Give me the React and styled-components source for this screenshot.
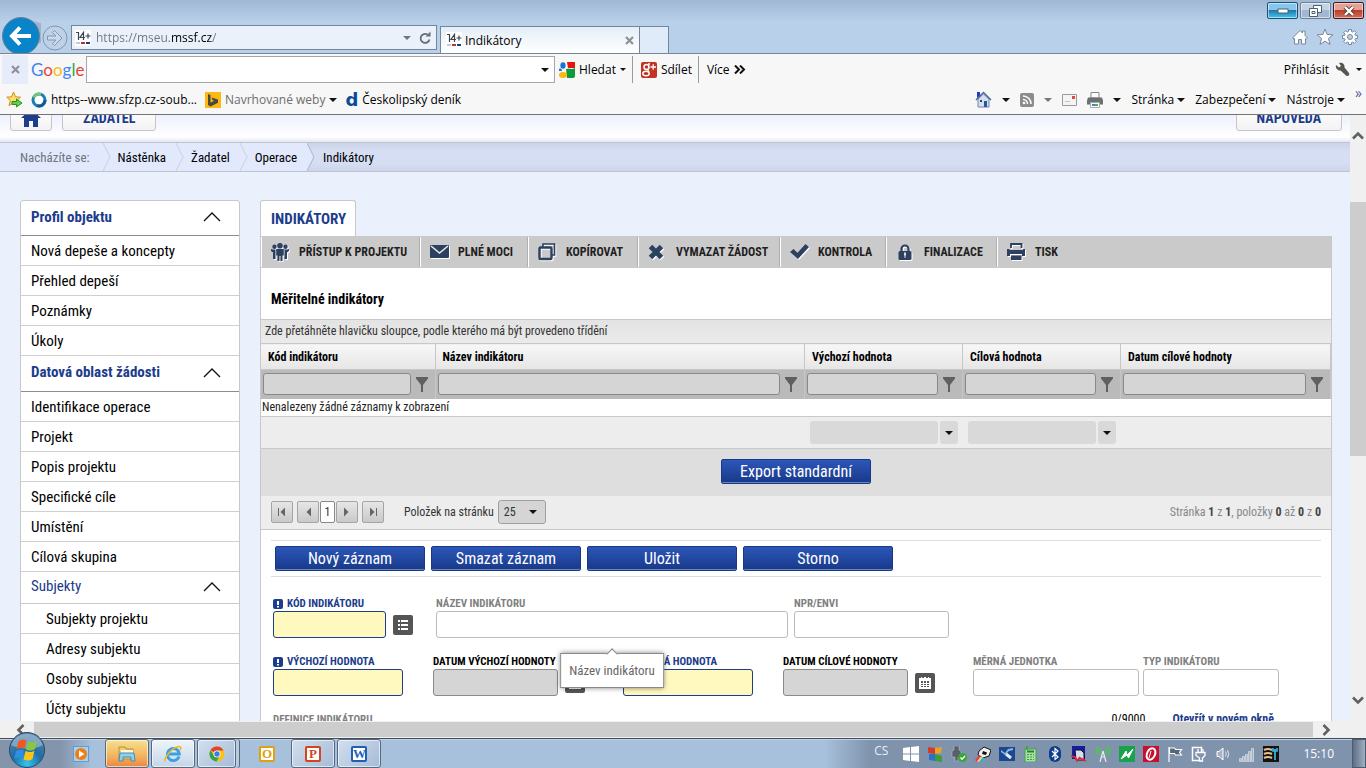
import React, { useState } from "react";
import styled, { createGlobalStyle, css } from "styled-components";

const condensed = `"Roboto Condensed", "Liberation Sans Narrow", Roboto, sans-serif`;
const system = `"Segoe UI", "Open Sans", sans-serif`;

const crumbs = ["Nástěnka", "Žadatel", "Operace"];

const menu = [
  {
    title: "Profil objektu",
    items: ["Nová depeše a koncepty", "Přehled depeší", "Poznámky", "Úkoly"],
  },
  {
    title: "Datová oblast žádosti",
    items: [
      "Identifikace operace",
      "Projekt",
      "Popis projektu",
      "Specifické cíle",
      "Umístění",
      "Cílová skupina",
    ],
  },
  {
    title: "Subjekty",
    nested: true,
    items: [
      "Subjekty projektu",
      "Adresy subjektu",
      "Osoby subjektu",
      "Účty subjektu",
    ],
  },
];

const columns = [
  { title: "Kód indikátoru", width: "174px" },
  { title: "Název indikátoru", width: "auto" },
  { title: "Výchozí hodnota", width: "158px", sum: true },
  { title: "Cílová hodnota", width: "158px", sum: true },
  { title: "Datum cílové hodnoty", width: "210px" },
];

/* ---------- icons ---------- */

const Caret = ({ color = "#111", size = 8 }) => (
  <svg width={size} height={size / 2} viewBox="0 0 8 4">
    <path d="M0 0h8L4 4z" fill={color} />
  </svg>
);

const Favicon = () => (
  <svg width="16" height="16" viewBox="0 0 16 16">
    <rect width="16" height="16" fill="#fff" />
    <path
      d="M1 2.500h2.500v7.500M8.500 10V2.500L5 7.500h5M10.500 6h5M13 3.500v5"
      fill="none"
      stroke="#3d4552"
      strokeWidth="1.200"
    />
    <path d="M1 12h4v2H1z" fill="#c9c9c9" />
    <path d="M6 12h4v2H6z" fill="#b5352c" />
    <path d="M11 12h4v2h-4z" fill="#1c3c8c" />
  </svg>
);

const BackIcon = () => (
  <svg width="40" height="36" viewBox="0 0 40 36">
    <path d="M20 1c10 0 12 4 20 5v20H30z" fill="#9fb4cc" />
    <circle cx="20" cy="19" r="18.500" fill="#0a84c8" stroke="#6b7f93" />
    <path
      d="M30 19H12M19 10.500L11 19l8 8.500"
      fill="none"
      stroke="#fff"
      strokeWidth="4"
    />
  </svg>
);

const ForwardIcon = () => (
  <svg width="26" height="26" viewBox="0 0 26 26">
    <circle cx="13" cy="13" r="12" fill="#bdd1e8" stroke="#8396ab" />
    <path
      d="M5.500 11h8.500l-3.500-3.500 2-2L20 13l-7.500 7.500-2-2L14 15H5.500z"
      fill="#c9daee"
      stroke="#8396ab"
    />
  </svg>
);

const RefreshIcon = () => (
  <svg width="12" height="14" viewBox="0 0 12 14">
    <path
      d="M10.500 8.500A4.500 4.500 0 1 1 8.500 3.600"
      fill="none"
      stroke="#666f78"
      strokeWidth="1.800"
    />
    <path d="M6.500 5.500h5V.500z" fill="#666f78" />
  </svg>
);

const CrossIcon = ({ size = 9, color = "#8d9297" }) => (
  <svg width={size} height={size} viewBox="0 0 9 9">
    <path d="M1 1l7 7M8 1L1 8" stroke={color} strokeWidth="2.200" />
  </svg>
);

const HomeOutline = () => (
  <svg width="18" height="18" viewBox="0 0 18 18">
    <path
      d="M2 9.500l7-7 2.500 2.500V3h2.500v4.500l2.500 2.500-1.200 1.200-.8-.7V16h-4v-4.500h-3V16h-4v-5.500l-.8.700z"
      fill="#fff"
      stroke="#76889c"
    />
  </svg>
);

const StarOutline = () => (
  <svg width="18" height="18" viewBox="0 0 18 18">
    <path
      d="M9 1l2.100 5.400 5.900.4-4.500 3.700 1.500 5.900L9 13.200l-5 3.200 1.500-5.900L1 6.800l5.900-.4z"
      fill="#fff"
      stroke="#76889c"
    />
  </svg>
);

const GearOutline = () => (
  <svg width="18" height="18" viewBox="0 0 18 18">
    <path
      d="M7.500 1.500h3v2l1.300.6 1.500-1.500 2 2-1.400 1.600.6 1.300h2v3h-2l-.6 1.300 1.400 1.600-2 2-1.500-1.400-1.300.5v2h-3v-2L6.200 14l-1.500 1.400-2-2 1.400-1.600-.6-1.300h-2v-3h2l.6-1.300-1.400-1.600 2-2 1.500 1.500 1.300-.6z"
      fill="#fff"
      stroke="#76889c"
    />
    <circle cx="9" cy="9" r="2.500" fill="#b9d0ea" stroke="#76889c" />
  </svg>
);

const SearchLogo = () => (
  <svg width="16" height="16" viewBox="0 0 16 16">
    <path d="M8 0h8v6H9z" fill="#e8150c" />
    <path d="M7 7c4-1 5 1 9-1v8c0 1-1 2-2 2H8z" fill="#0f9a3c" />
    <ellipse cx="4" cy="3.500" rx="2.600" ry="3.200" fill="#1673d1" />
    <ellipse cx="4" cy="13" rx="4" ry="3" fill="#f9b90f" />
    <path d="M0 7c2-1 3 0 3 2H0z" fill="#1673d1" />
  </svg>
);

const PlusLogo = () => (
  <svg width="16" height="16" viewBox="0 0 16 16">
    <rect width="16" height="16" rx="2" fill="#c23321" />
    <circle cx="5.500" cy="5" r="2.500" fill="none" stroke="#fff" strokeWidth="1.500" />
    <ellipse cx="5" cy="11.500" rx="3.200" ry="2.300" fill="none" stroke="#fff" strokeWidth="1.500" />
    <path d="M7 2h2M6.500 7.500L8 10M9.500 5h5.500M12.200 2.200v5.600" stroke="#fff" strokeWidth="1.300" />
  </svg>
);

const WrenchIcon = () => (
  <svg width="15" height="15" viewBox="0 0 15 15">
    <path
      d="M1 3l3 2.500L6 4 4 1c3-1 6 1 5.500 4.500L14 11c1 2-1 4-3 2.500L5.500 8.500C3 9 0 6 1 3z"
      fill="#55584f"
    />
  </svg>
);

const AddStar = () => (
  <svg width="17" height="17" viewBox="0 0 17 17">
    <path
      d="M7.500 1l2 4.800 5 .4-3.800 3.400 1.300 5-4.500-2.700L3 14.600l1.300-5L.8 6.200l4.800-.4z"
      fill="#ffdc6b"
      stroke="#c8901c"
    />
    <path d="M6 10.500h4.500V8l5.500 4-5.500 4v-2.500H6z" fill="#5bd24c" stroke="#2c8c28" />
  </svg>
);

const RingLogo = () => (
  <svg width="16" height="16" viewBox="0 0 16 16">
    <circle cx="8" cy="8" r="6" fill="#fff" stroke="#1c7fb4" strokeWidth="3" />
    <path d="M2.500 5.500A6 6 0 0 1 10 2.300" fill="none" stroke="#7cc576" strokeWidth="3" />
    <path d="M14 8a6 6 0 0 1-8 5.700" fill="none" stroke="#0f5a96" strokeWidth="3" />
  </svg>
);

const BingLogo = () => (
  <svg width="16" height="16" viewBox="0 0 16 16">
    <rect width="16" height="16" fill="#fdb813" />
    <path d="M3 2l2.500 1v7.500L9 9 7.500 8 6.500 5.500 13 7.500v3.200L5.500 14.500 3 13z" fill="#4a4a3a" />
  </svg>
);

const HouseColor = () => (
  <svg width="17" height="17" viewBox="0 0 17 17">
    <path d="M3 8v8h11V8L8.500 3z" fill="#d6dfec" stroke="#6b86b0" />
    <path d="M2 1h3v4l-3 2z" fill="#2438c8" />
    <path d="M1 9l7.500-7.500L16 9" fill="none" stroke="#4e6d9e" strokeWidth="1.500" />
    <path d="M9 10h3v6H9z" fill="#2556a8" />
    <path d="M5 9h2v2H5z" fill="#444" />
  </svg>
);

const FeedIcon = () => (
  <svg width="14" height="14" viewBox="0 0 14 14">
    <rect width="14" height="14" rx="2" fill="#8c8c8c" />
    <circle cx="4" cy="10" r="1.300" fill="#fff" />
    <path d="M3 6.500A4.500 4.500 0 0 1 7.500 11M3 3a8 8 0 0 1 8 8" fill="none" stroke="#fff" strokeWidth="1.500" />
  </svg>
);

const MailIcon = () => (
  <svg width="15" height="12" viewBox="0 0 15 12">
    <path d="M.500.500h14v11H.500z" fill="#f4f4f4" stroke="#9b9b9b" />
    <path d="M10 2h3v3h-3z" fill="#e04a3c" />
    <path d="M3 7.500h5" stroke="#c4c4c4" />
  </svg>
);

const PrinterColor = () => (
  <svg width="16" height="16" viewBox="0 0 16 16">
    <path d="M4 .500h8V6H4z" fill="#fff" stroke="#888" />
    <path d="M1 5.500h14l1 3v4H0v-4z" fill="#6d7073" />
    <path d="M3.500 10.500h9v5h-9z" fill="#fff" stroke="#aaa" />
    <path d="M5 12h3v2H5z" fill="#3a87d2" />
    <path d="M8 12h3v2H8z" fill="#55ad4b" />
  </svg>
);

const HomeSolid = () => (
  <svg width="20" height="18" viewBox="0 0 20 18">
    <path d="M10 0L0 9h3v9h5v-6h4v6h5V9h3z" fill="#1c3c8c" />
  </svg>
);

const ChevronUp = () => (
  <svg width="18" height="11" viewBox="0 0 18 11">
    <path d="M1 10l8-8 8 8" fill="none" stroke="#111" strokeWidth="1.300" />
  </svg>
);

const ScrollArrow = ({ turn = 0 }) => (
  <svg width="12" height="12" viewBox="0 0 12 12">
    <path
      d="M1 8.500l5-5 5 5"
      fill="none"
      stroke="#606060"
      strokeWidth="2.600"
      transform={`rotate(${turn} 6 6)`}
    />
  </svg>
);

const PeopleIcon = () => (
  <svg width="18" height="18" viewBox="0 0 18 18" fill="#2d4060">
    <circle cx="9" cy="2.800" r="2.800" />
    <circle cx="3.500" cy="3.800" r="2.200" />
    <circle cx="14.500" cy="3.800" r="2.200" />
    <path d="M5.200 6h7.600v6.500h-1.300V18H9.500v-5h-1v5H6.500v-5.500H5.200z" />
    <path d="M0 6l1.500.5h3V16H2V9.500L0 8zM18 6l-1.500.5h-3V16H16V9.500L18 8z" />
  </svg>
);

const EnvelopeIcon = () => (
  <svg width="20" height="14" viewBox="0 0 20 14">
    <rect y="0" width="19" height="13" rx="1" fill="#2d4060" />
    <path d="M1 1l8.500 7L18 1" fill="none" stroke="#e9e9e9" strokeWidth="1.600" />
  </svg>
);

const CopyIcon = () => (
  <svg width="18" height="18" viewBox="0 0 18 18" fill="none" stroke="#2d4060">
    <path d="M5 4V1h11.500v11H14" strokeWidth="1.600" />
    <rect x="1.500" y="4.500" width="12" height="11.500" rx="1" strokeWidth="2.400" />
  </svg>
);

const ThickCross = () => (
  <svg width="16" height="16" viewBox="0 0 16 16">
    <path d="M2.500 2.500l11 11M13.500 2.500l-11 11" stroke="#2d4060" strokeWidth="5" />
  </svg>
);

const CheckIcon = () => (
  <svg width="20" height="16" viewBox="0 0 20 16">
    <path d="M0 8l3.500-3 4 3.800L15.500 0 19 3 8 15z" fill="#2d4060" />
  </svg>
);

const LockIcon = () => (
  <svg width="16" height="17" viewBox="-2 0 16 17">
    <path d="M3.500 8V5a3.500 3.500 0 0 1 7 0v3" fill="none" stroke="#2d4060" strokeWidth="2.200" />
    <rect x="0.500" y="7" width="13" height="9" rx="1.500" fill="#2d4060" />
    <path d="M6 8.500h2v3h-.5V14h-1v-2.500H6z" fill="#ddd" />
  </svg>
);

const PrintIcon = () => (
  <svg width="19" height="18" viewBox="0 0 19 18">
    <path d="M4 5V1h10.500v4" fill="none" stroke="#2d4060" strokeWidth="1.800" />
    <path d="M0 6h2l1 1h12.500l1-1H18v7h-3v-2H3v2H0z" fill="#2d4060" />
    <path d="M4 12.500h10.500V17H4z" fill="#2d4060" />
  </svg>
);

const FunnelIcon = () => (
  <svg width="12" height="15" viewBox="0 0 12 15">
    <path d="M0 0h12v1.500L7 8v7H5V8L0 1.500z" fill="#606060" />
  </svg>
);

const ListIcon = () => (
  <svg width="12" height="12" viewBox="0 0 12 12" fill="#fff">
    <path d="M1 1h2v2H1zM4 1h7v2H4zM1 5h2v2H1zM4 5h7v2H4zM1 9h2v2H1zM4 9h7v2H4z" />
  </svg>
);

const CalendarIcon = () => (
  <svg width="12" height="12" viewBox="0 0 12 12">
    <path d="M0 1h2V0h1v1h2V0h2v1h2V0h1v1h2v11H0z" fill="#fff" />
    <path
      d="M2 4h2v2H2zM5 4h2v2H5zM8 4h2v2H8zM2 7h2v1H2zM5 7h2v1H5zM8 7h2v1H8zM2 9h2v1H2zM5 9h2v1H5zM8 9h2v1H8z"
      fill="#555"
    />
  </svg>
);

const RequiredMark = () => (
  <svg width="10" height="10" viewBox="0 0 10 10">
    <rect width="10" height="10" rx="2" fill="#1c3c8c" />
    <path d="M4 2h2v4H4zM4 7h2v1.500H4z" fill="#fff" />
  </svg>
);

const PagerIcon = ({ flip, end }) => (
  <svg width="8" height="10" viewBox="0 0 8 10">
    <g transform={flip ? "matrix(-1 0 0 1 8 0)" : undefined}>
      {end && <path d="M0 1h1v8H0z" fill="#666" />}
      <path d="M7 .500v9L2.500 5z" fill="#666" />
    </g>
  </svg>
);

const Orb = () => (
  <svg width="36" height="36" viewBox="0 0 36 36">
    <defs>
      <radialGradient id="orb" cx="50%" cy="90%" r="85%">
        <stop offset="0" stopColor="#35c5ee" />
        <stop offset="0.5" stopColor="#1d6ea6" />
        <stop offset="1" stopColor="#5c84a8" />
      </radialGradient>
    </defs>
    <circle cx="18" cy="18" r="17.500" fill="url(#orb)" stroke="#264a6b" />
    <path d="M2 13a17 17 0 0 1 32 0c-9 5-22 5-32 0z" fill="#b9cfe0" opacity="0.500" />
    <path d="M9.500 9c3-2 5.500-2 8-.5L15.500 17c-3-1.500-5-1-8 .5z" fill="#ee5a24" />
    <path d="M19 9.500c3 1.500 5.500 1.500 9-.5l-2 8c-3 2-6 2-9 .5z" fill="#8cc63f" />
    <path d="M7 19c3-1.500 5-2 8-.5L13 26.500c-2.500-1.500-5-1-8 .5z" fill="#2f8fe0" />
    <path d="M16.500 19c3 1.500 6 1.500 9-.5l-2 8.500c-3 2-6 2-9 .5z" fill="#fcc419" />
  </svg>
);

const PlayerIcon = () => (
  <svg width="16" height="16" viewBox="0 0 16 16">
    <rect x="0.500" y="0.500" width="15" height="15" fill="#a9d0ee" stroke="#5e9dcc" />
    <circle cx="8" cy="8" r="6" fill="#ee7f14" />
    <path d="M6 4.500v7l5.500-3.500z" fill="#fff" />
  </svg>
);

const FolderIcon = () => (
  <svg width="18" height="16" viewBox="0 0 18 16">
    <path d="M1 1h6l1 2h7v10H1z" fill="#efcf72" stroke="#b99030" />
    <path d="M3 4h12v6H3z" fill="#fff8dc" />
    <path d="M2 7h14l1 8h-4v-4H5v4H1z" fill="#8fd0ee" stroke="#3f90bb" />
  </svg>
);

const ExplorerIcon = () => (
  <svg width="18" height="18" viewBox="0 0 18 18" fill="none">
    <path d="M15 11.500a6 6 0 1 1 .3-2.500H5" stroke="#3aa0e0" strokeWidth="2.800" />
    <path d="M1 16.500C0 12 9 2 15 1.500c2.500 0 2 2 1 3.500" stroke="#f3b61f" strokeWidth="1.500" />
  </svg>
);

const ChromeIcon = () => (
  <svg width="16" height="16" viewBox="0 0 16 16">
    <circle cx="8" cy="8" r="7.500" fill="#fbc116" />
    <path d="M8 8L1.500 4.200A7.500 7.500 0 0 1 14.500 4.500H8z" fill="#e0432f" />
    <path d="M1.500 4.200A7.500 7.500 0 0 0 7.500 15.500L11 9.500 8 8 4.800 9.500z" fill="#2da14d" />
    <circle cx="8" cy="8" r="3.500" fill="#fff" />
    <circle cx="8" cy="8" r="2.700" fill="#3d7ce0" />
  </svg>
);

const trayIcons = [
  <path d="M0 2l7-1v6.500H0zM8 1l8-1v7.500H8zM0 8.500h7V15l-7-1zM8 8.500h8V16l-8-1z" fill="#fff" />,
  <>
    <path d="M1 1l7 1v6L1 7z" fill="#d33c2a" />
    <path d="M8 2l7-1-1 6-6 1z" fill="#e9a22a" />
    <path d="M2 8h6v7l-6-1z" fill="#2a73c9" />
    <path d="M8 8l7 2v6l-7-1z" fill="#3e9c3a" />
  </>,
  <>
    <path d="M3 0h5v4l2 1v6H7v4H4v-4H1V5l2-1z" fill="#5b6068" stroke="#c7cbd0" strokeWidth="0.500" />
    <circle cx="11.500" cy="11.500" r="4.500" fill="#38a836" />
    <path d="M9.500 11.500l1.500 1.700 3-3.200" fill="none" stroke="#fff" strokeWidth="1.300" />
  </>,
  <>
    <path d="M4 5l5-4 7 3-2 6-6 2-5-3z" fill="#f1f1f1" stroke="#111" />
    <path d="M8 5l4 1.500-1 2.500-4-1z" fill="#111" />
    <path d="M0 14l4-5 2 1-4 6z" fill="#e43b6a" />
    <path d="M2 15.500l4-5 2 1-4 4.500z" fill="#f0e050" />
    <path d="M4 16l4-4.500 2 .5-3 4z" fill="#26b7d8" />
  </>,
  <>
    <rect width="16" height="14" y="1" fill="#1c4891" />
    <path d="M2 4l4 3 3-4 5-1v2l-4 1-4 4-4-3z" fill="#8db6e6" />
    <path d="M7 8l5 4" stroke="#e5eef8" strokeWidth="3" />
  </>,
  <>
    <rect x="2" y="3" width="11" height="13" fill="#a8e2a5" stroke="#45a34a" />
    <path d="M4 0v4" stroke="#45a34a" strokeWidth="2" />
    <path d="M4 5.500h7" stroke="#2f7d38" strokeWidth="2" />
    <path d="M4 8.500h7M4 11h7M4 13.500h7" stroke="#3f9a48" strokeDasharray="2 1" />
  </>,
  <>
    <rect x="2" width="12" height="16" rx="6" fill="#0b3d8c" />
    <path d="M5 5l6 6-3 2.500v-11L11 5l-6 6" fill="none" stroke="#fff" strokeWidth="1.200" />
  </>,
  <>
    <rect x="1" width="13" height="13" fill="#141e9c" />
    <path d="M4 4h6l3 3v7H5z" fill="#d8dcf4" stroke="#111" />
    <path d="M0 10l4 1 2 4 3-4M9 12l6 3" stroke="#e32636" strokeWidth="1.700" fill="none" />
  </>,
  <>
    <path d="M8 5l-3 11M8 5l3 11M6 11h4" stroke="#e8ede8" strokeWidth="1.200" fill="none" />
    <path
      d="M3 1Q-.500 5 3 9M13 1q3.500 4 0 8M5.500 2.500q-2 2.500 0 5M10.500 2.500q2 2.500 0 5"
      stroke="#45d03c"
      strokeWidth="1.500"
      fill="none"
    />
  </>,
  <>
    <rect width="16" height="16" fill="#18a24b" />
    <path d="M2 13L7 5l1 4 6-6-4.500 9L8 9z" fill="#fff" stroke="#fff" />
  </>,
  <>
    <rect width="16" height="16" fill="#c8102e" />
    <ellipse cx="8" cy="8" rx="4" ry="6" fill="none" stroke="#fff" strokeWidth="2" transform="rotate(25 8 8)" />
    <path d="M8 5l-2 7" stroke="#fff" />
  </>,
  <path
    d="M2 1v15M2.500 2h5l1 1.500h6l-2 3 2 2.500h-6l-1-1.500h-5z"
    fill="#55667c"
    stroke="#fff"
    strokeWidth="1.200"
  />,
  <>
    <path d="M1.500 1.500h9v13h-9z" fill="none" stroke="#fff" strokeWidth="1.500" />
    <path d="M7 3v4M12 3v4M5 6.500h9v3L11.500 12v3h-3v-3L5 9.500z" fill="#8394ad" stroke="#fff" strokeWidth="1.300" />
  </>,
  <>
    <path d="M2 5.500h2L8 2v12l-4-3.500H2z" fill="#a9b4c2" stroke="#fff" />
    <path d="M10.500 5.500q1.500 2.500 0 5M12.500 4q2.500 4 0 8" fill="none" stroke="#dfe5ec" />
  </>,
  <path
    d="M.500 12.500h2v3h-2zM3.500 10.500h2v5h-2zM6.500 8.500h2v7h-2zM9.500 5.500h2v10h-2zM12.500 2.500h2v13h-2z"
    fill="#a7b3c3"
    stroke="#e9edf2"
    strokeWidth="0.600"
  />,
  <>
    <rect width="16" height="16" fill="#15130f" />
    <path d="M1 4q4-2 8 0M1 8q4-2 8 0M1 12q4-2 8 0" stroke="#e6c08f" strokeWidth="2" fill="none" />
    <path d="M12 3v11M10 2v3h4V2" stroke="#35b6e6" strokeWidth="1.700" fill="none" />
  </>,
];

const actions = [
  { label: "PŘÍSTUP K PROJEKTU", icon: <PeopleIcon />, width: 159 },
  { label: "PLNÉ MOCI", icon: <EnvelopeIcon />, width: 108 },
  { label: "KOPÍROVAT", icon: <CopyIcon />, width: 110 },
  { label: "VYMAZAT ŽÁDOST", icon: <ThickCross />, width: 142 },
  { label: "KONTROLA", icon: <CheckIcon />, width: 106 },
  { label: "FINALIZACE", icon: <LockIcon />, width: 111 },
  { label: "TISK", icon: <PrintIcon />, width: 90 },
];

/* ---------- parts ---------- */

const FormField = ({ id, label, tone, width, tip, children }) => (
  <Field>
    <FieldLabel htmlFor={id} $tone={tone}>
      {tone === "required" && <RequiredMark />}
      {label}
    </FieldLabel>
    <FieldRow>
      <FieldBox $width={width}>
        <FieldInput id={id} $tone={tone} disabled={tone === "date"} />
        {tip && <Tooltip role="tooltip">{tip}</Tooltip>}
      </FieldBox>
      {children}
    </FieldRow>
  </Field>
);

const Browser = () => (
  <>
    <TitleBar>
      <WindowButtons>
        <WindowButton $kind="min" aria-label="Minimalizovat">
          <svg width="12" height="6" viewBox="0 0 12 6">
            <rect x="1" y="1" width="10" height="4" fill="#fff" stroke="#4d6070" />
          </svg>
        </WindowButton>
        <WindowButton aria-label="Obnovit">
          <svg width="13" height="12" viewBox="0 0 13 12" fill="#fff" stroke="#4d6070">
            <path d="M4.500.500h8v7h-8z" />
            <path d="M.500 3.500h8v8h-8zM3 6.500h3v2H3z" />
          </svg>
        </WindowButton>
        <WindowButton $kind="close" aria-label="Zavřít">
          <svg width="12" height="10" viewBox="0 0 12 10">
            <path d="M2 1l8 8M10 1L2 9" stroke="#5a3a3a" strokeWidth="4" />
            <path d="M2 1l8 8M10 1L2 9" stroke="#fff" strokeWidth="2.400" />
          </svg>
        </WindowButton>
      </WindowButtons>
      <TabRow>
        <NavButton aria-label="Zpět">
          <BackIcon />
        </NavButton>
        <NavButton aria-label="Vpřed">
          <ForwardIcon />
        </NavButton>
        <AddressBar>
          <Favicon />
          <AddressInput aria-label="Adresa" defaultValue="https://mseu.mssf.cz/" />
          <Caret color="#6d7780" />
          <RefreshIcon />
        </AddressBar>
        <Tab>
          <Favicon />
          <span>Indikátory</span>
          <CrossIcon />
        </Tab>
        <NewTab aria-label="Nová karta" />
        <ToolIcons>
          <HomeOutline />
          <StarOutline />
          <GearOutline />
        </ToolIcons>
      </TabRow>
    </TitleBar>
    <GoogleBar>
      <CloseBar aria-label="Zavřít panel">
        <CrossIcon />
      </CloseBar>
      <GoogleLogo>
        <i>G</i>
        <i>o</i>
        <i>o</i>
        <i>g</i>
        <i>l</i>
        <i>e</i>
      </GoogleLogo>
      <GoogleSearch>
        <input aria-label="Hledat Google" />
        <Caret />
      </GoogleSearch>
      <BarButton>
        <SearchLogo />
        Hledat
        <Caret size={6} />
      </BarButton>
      <BarRule />
      <BarButton>
        <PlusLogo />
        Sdílet
      </BarButton>
      <BarRule />
      <BarButton>
        Více
        <svg width="12" height="9" viewBox="0 0 12 9">
          <path d="M1 .500l4 4-4 4M6 .500l4 4-4 4" fill="none" stroke="#111" strokeWidth="2" />
        </svg>
      </BarButton>
      <BarEnd>
        <BarButton>
          Přihlásit
          <WrenchIcon />
          <Caret size={6} />
        </BarButton>
      </BarEnd>
    </GoogleBar>
    <FavBar>
      <AddStar />
      <FavLink href="#sfzp">
        <RingLogo />
        https--www.sfzp.cz-soub...
      </FavLink>
      <FavLink href="#weby" $muted>
        <BingLogo />
        Navrhované weby
        <Caret />
      </FavLink>
      <FavLink href="#denik">
        <DenikMark>d</DenikMark>
        Českolipský deník
      </FavLink>
      <CommandBar>
        <HouseColor />
        <Caret />
        <FeedIcon />
        <Caret color="#777" />
        <MailIcon />
        <PrinterColor />
        <Caret />
        {["Stránka", "Zabezpečení", "Nástroje"].map((name) => (
          <MenuButton key={name}>
            {name}
            <Caret />
          </MenuButton>
        ))}
        <Overflow>»</Overflow>
      </CommandBar>
    </FavBar>
  </>
);

const Sidebar = () => (
  <Side>
    {menu.map((group) => (
      <section key={group.title}>
        <SideTitle $light={group.nested}>
          {group.title}
          <ChevronUp />
        </SideTitle>
        {group.items.map((item) => (
          <SideLink key={item} href="#menu" $nested={group.nested}>
            {item}
          </SideLink>
        ))}
      </section>
    ))}
  </Side>
);

const Grid = () => (
  <>
    <GroupHint>
      Zde přetáhněte hlavičku sloupce, podle kterého má být provedeno třídění
    </GroupHint>
    <Table>
      <colgroup>
        {columns.map((col) => (
          <Col key={col.title} $width={col.width} />
        ))}
      </colgroup>
      <thead>
        <tr>
          {columns.map((col) => (
            <HeadCell key={col.title}>{col.title}</HeadCell>
          ))}
        </tr>
        <tr>
          {columns.map((col) => (
            <FilterCell key={col.title}>
              <FilterWrap>
                <input aria-label={`Filtr ${col.title}`} />
                <FunnelIcon />
              </FilterWrap>
            </FilterCell>
          ))}
        </tr>
      </thead>
      <tbody>
        <tr>
          <EmptyCell colSpan={5}>Nenalezeny žádné záznamy k zobrazení</EmptyCell>
        </tr>
      </tbody>
      <tfoot>
        <tr>
          {columns.map((col) => (
            <FootCell key={col.title}>
              {col.sum && (
                <SumWrap>
                  <input aria-label={`Souhrn ${col.title}`} />
                  <button aria-label="Rozbalit">
                    <Caret />
                  </button>
                </SumWrap>
              )}
            </FootCell>
          ))}
        </tr>
      </tfoot>
    </Table>
    <ExportRow>
      <BlueButton>Export standardní</BlueButton>
    </ExportRow>
  </>
);

const Pager = () => {
  const [size, setSize] = useState("25");
  return (
    <PagerRow>
      <PagerButton aria-label="První">
        <PagerIcon end />
      </PagerButton>
      <PageGroup>
        <PagerButton aria-label="Předchozí">
          <PagerIcon />
        </PagerButton>
        <CurrentPage>1</CurrentPage>
        <PagerButton aria-label="Další">
          <PagerIcon flip />
        </PagerButton>
      </PageGroup>
      <PagerButton aria-label="Poslední">
        <PagerIcon flip end />
      </PagerButton>
      <PageSizeLabel htmlFor="pageSize">Položek na stránku</PageSizeLabel>
      <SelectWrap>
        <select id="pageSize" value={size} onChange={(e) => setSize(e.target.value)}>
          <option>25</option>
          <option>50</option>
          <option>100</option>
        </select>
        <Caret />
      </SelectWrap>
      <PageInfo>
        Stránka <b>1</b> z <b>1</b>, položky <b>0</b> až <b>0</b> z <b>0</b>
      </PageInfo>
    </PagerRow>
  );
};

const RecordForm = () => (
  <FormArea>
    <ButtonStrip>
      {["Nový záznam", "Smazat záznam", "Uložit", "Storno"].map((name) => (
        <BlueButton key={name}>{name}</BlueButton>
      ))}
    </ButtonStrip>
    <Fields $cols="163px 358px 155px">
      <FormField id="kod" label="KÓD INDIKÁTORU" tone="required" width={113}>
        <IconButton aria-label="Vybrat ze seznamu">
          <ListIcon />
        </IconButton>
      </FormField>
      <FormField id="nazev" label="NÁZEV INDIKÁTORU" width={352} tip="Název indikátoru" />
      <FormField id="npr" label="NPR/ENVI" width={155} />
    </Fields>
    <Fields $cols="160px 190px 160px 190px 170px 136px">
      <FormField id="vychozi" label="VÝCHOZÍ HODNOTA" tone="required" width={130} />
      <FormField id="datumVychozi" label="DATUM VÝCHOZÍ HODNOTY" tone="date" width={125}>
        <IconButton aria-label="Kalendář">
          <CalendarIcon />
        </IconButton>
      </FormField>
      <FormField id="cilova" label="CÍLOVÁ HODNOTA" tone="required" width={130} />
      <FormField id="datumCilove" label="DATUM CÍLOVÉ HODNOTY" tone="date" width={125}>
        <IconButton aria-label="Kalendář">
          <CalendarIcon />
        </IconButton>
      </FormField>
      <FormField id="jednotka" label="MĚRNÁ JEDNOTKA" width={166} />
      <FormField id="typ" label="TYP INDIKÁTORU" width={136} />
    </Fields>
    <DefinitionRow>
      <FieldLabel as="span">DEFINICE INDIKÁTORU</FieldLabel>
      <span>0/9000</span>
      <a href="#okno">Otevřít v novém okně</a>
    </DefinitionRow>
  </FormArea>
);

const Taskbar = () => (
  <TaskRow>
    <StartButton aria-label="Start">
      <Orb />
    </StartButton>
    <TaskButton aria-label="Přehrávač">
      <PlayerIcon />
    </TaskButton>
    <TaskButton $state="alert" aria-label="Průzkumník">
      <FolderIcon />
    </TaskButton>
    <TaskButton $state="active" aria-label="Internet Explorer">
      <ExplorerIcon />
    </TaskButton>
    <TaskButton $state="open" $stacked aria-label="Chrome">
      <ChromeIcon />
    </TaskButton>
    <TaskButton aria-label="Outlook">
      <OfficeMark $color="#e0a010">O</OfficeMark>
    </TaskButton>
    <TaskButton $state="open" aria-label="PowerPoint">
      <OfficeMark $color="#d2451e">P</OfficeMark>
    </TaskButton>
    <TaskButton $state="open" aria-label="Word">
      <OfficeMark $color="#1f5fb4">W</OfficeMark>
    </TaskButton>
    <Tray>
      <Lang>CS</Lang>
      {trayIcons.map((icon, i) => (
        <svg key={i} width="16" height="16" viewBox="0 0 16 16">
          {icon}
        </svg>
      ))}
      <Clock>15:10</Clock>
      <ShowDesktop aria-label="Zobrazit plochu" />
    </Tray>
  </TaskRow>
);

const CrumbArrow = ({ $last }) => (
  <ArrowSvg width="8" viewBox="0 0 8 28" height="28" $last={$last}>
    <path d="M0 0l7 14L0 28z" fill="#e2e9fd" />
    <path d="M0 0l7 14L0 28" fill="none" stroke={$last ? "#a9b3cc" : "#c8cedd"} />
  </ArrowSvg>
);

const App = () => (
  <Screen>
    <GlobalStyle />
    <Browser />
    <Viewport>
      <Page>
        <PageHeader>
          <HeaderButton aria-label="Domů" $pad={10}>
            <HomeSolid />
          </HeaderButton>
          <HeaderButton $pad={20}>ŽADATEL</HeaderButton>
          <HeaderButton $pad={20} $last>
            NÁPOVĚDA
          </HeaderButton>
        </PageHeader>
        <Breadcrumb>
          <Crumb $muted>Nacházíte se:</Crumb>
          {crumbs.map((name) => (
            <React.Fragment key={name}>
              <CrumbArrow />
              <Crumb as="a" href="#crumb">
                {name}
              </Crumb>
            </React.Fragment>
          ))}
          <CrumbArrow $last />
          <LastCrumb>Indikátory</LastCrumb>
        </Breadcrumb>
        <Content>
          <Sidebar />
          <Main>
            <PanelTab>INDIKÁTORY</PanelTab>
            <Panel>
              <ActionBar>
                {actions.map((a) => (
                  <ActionButton key={a.label} $width={a.width}>
                    <ActionIcon>{a.icon}</ActionIcon>
                    {a.label}
                  </ActionButton>
                ))}
              </ActionBar>
              <PanelTitle>Měřitelné indikátory</PanelTitle>
              <Grid />
              <Pager />
              <RecordForm />
            </Panel>
          </Main>
        </Content>
      </Page>
      <VScroll>
        <ScrollArrow />
        <VThumb />
        <ScrollArrow turn={180} />
      </VScroll>
    </Viewport>
    <HScroll>
      <ScrollArrow turn={-90} />
      <HThumb />
      <ScrollArrow turn={90} />
    </HScroll>
    <Taskbar />
  </Screen>
);

/* ---------- styles ---------- */

const GlobalStyle = createGlobalStyle`
  * {
    box-sizing: border-box;
  }
  body {
    margin: 0;
    font-family: ${condensed};
    color: #000;
  }
  button, input, select {
    font-family: inherit;
    color: inherit;
    margin: 0;
  }
  button {
    border: none;
    background: none;
    padding: 0;
  }
  a {
    color: inherit;
    text-decoration: none;
  }
  svg {
    flex: none;
    display: block;
  }
`;

const Screen = styled.div`
  display: flex;
  flex-direction: column;
  height: 100vh;
  overflow: hidden;
`;

const TitleBar = styled.header`
  height: 54px;
  flex: none;
  display: flex;
  flex-direction: column;
  background: linear-gradient(#9fb8d3, #b9d0ea 22px);
  border-bottom: 1px solid #75869a;
  font-family: ${system};
  font-size: 12px;
`;

const WindowButtons = styled.div`
  display: flex;
  justify-content: flex-end;
  gap: 2px;
  padding: 2px 2px 0 0;
  height: 18px;
`;

const WindowButton = styled.button`
  width: 31px;
  height: 17px;
  display: flex;
  align-items: center;
  justify-content: center;
  border: 1px solid #6d7f96;
  border-radius: 2px;
  box-shadow: inset 0 0 0 1px rgba(255, 255, 255, 0.5);
  background: linear-gradient(#c3d3e6 50%, #a2b8d2 50%);
  ${({ $kind }) =>
    $kind === "min" &&
    css`
      border-color: #1d4f77;
      background: linear-gradient(#86c8ec 45%, #2a75a8 50%, #3ccbf0);
    `}
  ${({ $kind }) =>
    $kind === "close" &&
    css`
      border-color: #47151a;
      background: linear-gradient(#e5a195 45%, #b8402a 50%, #d0705a);
    `}
`;

const TabRow = styled.div`
  display: flex;
  align-items: flex-end;
  height: 35px;
`;

const NavButton = styled.button`
  width: 42px;
  height: 36px;
  display: flex;
  align-items: center;
  justify-content: center;

  & + & {
    width: 26px;
    height: 30px;
    margin-right: 3px;
  }
`;

const AddressBar = styled.div`
  display: flex;
  align-items: center;
  gap: 5px;
  width: 366px;
  height: 25px;
  margin: 0 3px 3px 0;
  padding: 0 5px 0 3px;
  border: 1px solid #75869a;
  background: #eaf1fa;

  & > svg:last-child {
    margin-left: 3px;
  }
`;

const AddressInput = styled.input`
  flex: 1;
  min-width: 0;
  border: none;
  padding: 0;
  font-size: 12px;
  line-height: 20px;
  background: linear-gradient(90deg, #70767c 74px, #000 74px, #000 116px, #70767c 116px);
  background-clip: text;
  -webkit-text-fill-color: transparent;
`;

const Tab = styled.div`
  display: flex;
  align-items: center;
  gap: 3px;
  width: 200px;
  height: 27px;
  padding: 0 5px;
  border: 1px solid #75869a;
  border-bottom: none;
  background: linear-gradient(#e4eef7, #fff);

  & span {
    flex: 1;
  }
`;

const NewTab = styled.button`
  width: 29px;
  height: 27px;
  border: 1px solid #75869a;
  border-width: 1px 1px 0 0;
  background: #dfebf8;
`;

const ToolIcons = styled.div`
  display: flex;
  gap: 7px;
  margin: 0 7px 7px auto;
`;

const GoogleBar = styled.div`
  flex: none;
  display: flex;
  align-items: center;
  height: 31px;
  padding-left: 2px;
  background: #f7f7f7;
  font-family: ${system};
  font-size: 12px;
`;

const CloseBar = styled.button`
  width: 26px;
  height: 29px;
  display: flex;
  align-items: center;
  justify-content: center;
  background: #e7ecfa;
`;

const GoogleLogo = styled.div`
  width: 55px;
  margin-left: 3px;
  font-family: Lato, sans-serif;
  font-size: 17px;
  line-height: 24px;

  & i {
    font-style: normal;
    color: #4285f4;
  }
  & i:nth-child(2),
  & i:nth-child(6) {
    color: #ea4335;
  }
  & i:nth-child(3) {
    color: #fbbc05;
  }
  & i:nth-child(5) {
    color: #34a853;
  }
`;

const GoogleSearch = styled.div`
  display: flex;
  align-items: center;
  width: 469px;
  height: 27px;
  padding-right: 5px;
  border: 1px solid #a5a5ad;
  background: #fff;

  & input {
    flex: 1;
    border: none;
    background: none;
  }
`;

const BarButton = styled.button`
  display: flex;
  align-items: center;
  gap: 4px;
  padding: 0 5px 0 4px;
  font-size: 12px;
  white-space: nowrap;
`;

const BarRule = styled.div`
  width: 1px;
  height: 27px;
  margin: 0 4px 0 1px;
  background: #9b9b9b;
`;

const BarEnd = styled.div`
  margin-left: auto;
  & button {
    gap: 6px;
    padding: 0 4px 0 0;
  }
`;

const FavBar = styled.div`
  flex: none;
  display: flex;
  align-items: center;
  gap: 8px;
  height: 30px;
  padding: 0 4px 0 6px;
  background: #f7f7f7;
  border-bottom: 1px solid #737373;
  font-family: ${system};
  font-size: 12px;
`;

const FavLink = styled.a`
  display: flex;
  align-items: center;
  gap: 4px;
  white-space: nowrap;
  color: ${({ $muted }) => ($muted ? "#6d6d6d" : "#000")};
`;

const DenikMark = styled.b`
  font-family: "DejaVu Sans", sans-serif;
  font-size: 18px;
  line-height: 18px;
  color: #0c4a9c;
`;

const CommandBar = styled.div`
  display: flex;
  align-items: center;
  gap: 10px;
  margin-left: auto;
`;

const MenuButton = styled.button`
  display: flex;
  align-items: center;
  gap: 3px;
  font-size: 12px;
`;

const Overflow = styled.span`
  align-self: flex-start;
  font-size: 14px;
  line-height: 4px;
  color: #5a5aa5;
`;

const Viewport = styled.div`
  flex: 1;
  min-height: 0;
  display: flex;
`;

const Page = styled.div`
  flex: 1;
  min-width: 0;
  overflow: hidden;
  background: #ebf0fd;
`;

const PageHeader = styled.div`
  display: flex;
  align-items: flex-end;
  gap: 10px;
  height: 27px;
  padding: 0 8px 11px 10px;
  overflow: hidden;
  background: linear-gradient(#edf1fd, #fff 22px, #e3e7f3);
`;

const HeaderButton = styled.button`
  flex: none;
  display: flex;
  align-items: center;
  justify-content: center;
  height: 28px;
  padding: 2px ${({ $pad }) => $pad}px 0;
  border: 1px solid #c5c5cc;
  border-radius: 3px;
  background: linear-gradient(#fff, #f3f3f5);
  font-size: 14px;
  font-weight: bold;
  color: #1c3c8c;
  margin-left: ${({ $last }) => ($last ? "auto" : 0)};
`;

const Breadcrumb = styled.nav`
  display: flex;
  align-items: center;
  height: 30px;
  border: 1px solid #c0c3cc;
  border-width: 1px 0;
  background: #e2e9fd;
  font-size: 13px;
`;

const Crumb = styled.span`
  padding: 0 10px 0 7px;
  color: ${({ $muted }) => ($muted ? "#6f747c" : "#000")};

  &:first-child {
    padding: 0 13px 0 20px;
  }
`;

const ArrowSvg = styled.svg`
  background: ${({ $last }) =>
    $last ? "linear-gradient(#cbd3e8, #d6def4 8px, #d6def4 20px, #cdd5ea)" : "none"};
`;

const LastCrumb = styled.span`
  flex: 1;
  align-self: stretch;
  padding-left: 8px;
  line-height: 30px;
  background: linear-gradient(#cbd3e8, #d6def4 8px, #d6def4 20px, #cdd5ea);
`;

const Content = styled.div`
  display: flex;
  align-items: flex-start;
  gap: 20px;
  padding: 28px 18px 0 20px;
`;

const Side = styled.aside`
  flex: none;
  width: 220px;
  border: 1px solid #c8c8c8;
  border-radius: 3px 3px 0 0;
  background: #fff;

  & section:first-child h3 {
    height: 35px;
  }
`;

const SideTitle = styled.h3`
  display: flex;
  align-items: center;
  justify-content: space-between;
  height: ${({ $light }) => ($light ? 32 : 36)}px;
  margin: 0;
  padding: 0 18px 3px 10px;
  border-bottom: 1px solid ${({ $light }) => ($light ? "#c8c8c8" : "#8d8d8d")};
  font-size: 15px;
  font-weight: ${({ $light }) => ($light ? "normal" : "bold")};
  color: #1c3c8c;
`;

const SideLink = styled.a`
  display: block;
  height: 30px;
  padding-left: ${({ $nested }) => ($nested ? 25 : 10)}px;
  border-bottom: 1px solid #d0d0d0;
  font-size: 15px;
  line-height: 30px;
`;

const Main = styled.main`
  flex: 1;
  min-width: 0;
`;

const PanelTab = styled.h2`
  width: fit-content;
  height: 36px;
  margin: 0;
  padding: 0 9px 0 10px;
  border: 1px solid #c8c8c8;
  border-bottom: none;
  border-radius: 3px 3px 0 0;
  background: #fff;
  font-size: 15px;
  line-height: 36px;
  color: #1c3c8c;
`;

const Panel = styled.div`
  border: 1px solid #c8c8c8;
  border-width: 0 1px;
  background: #fff;
`;

const ActionBar = styled.div`
  display: flex;
  height: 32px;
  padding: 1px 0;
  background: #cacaca;
`;

const ActionButton = styled.button`
  display: flex;
  align-items: center;
  width: ${({ $width }) => $width}px;
  padding-left: 9px;
  border-left: 1px solid #fff;
  border-right: 1px solid #b0b0b0;
  font-size: 12px;
  font-weight: bold;
  color: #1f1f1f;
  white-space: nowrap;

  &:last-child {
    border-right: none;
  }
`;

const ActionIcon = styled.span`
  width: 28px;
  filter: drop-shadow(1px 1px 0 #fff);
`;

const PanelTitle = styled.h1`
  height: 51px;
  margin: 0;
  padding: 10px 10px 0;
  font-size: 14px;
  line-height: 42px;
`;

const GroupHint = styled.div`
  height: 24px;
  padding-left: 4px;
  border-top: 1px solid #c7c7c7;
  background: linear-gradient(#e3e3e3, #ebebeb);
  font-size: 12px;
  line-height: 23px;
  color: #333;
`;

const Table = styled.table`
  width: 100%;
  table-layout: fixed;
  border-collapse: collapse;
  border-spacing: 0;
`;

const Col = styled.col`
  width: ${({ $width }) => $width};
`;

const HeadCell = styled.th`
  height: 26px;
  padding: 0 7px;
  border: 1px solid #c7c7c7;
  border-left: none;
  background: linear-gradient(#f7f7f7, #e6e6e6);
  font-size: 12px;
  text-align: left;
`;

const FilterCell = styled.td`
  height: 29px;
  padding: 0;
  border-right: 1px solid #c7c7c7;
  background: #bababa;
`;

const FilterWrap = styled.div`
  display: flex;
  align-items: center;
  gap: 5px;
  padding: 0 7px 0 2px;

  & input {
    flex: 1;
    min-width: 0;
    height: 22px;
    border: 1px solid #888;
    border-radius: 3px;
    background: #d5d5d5;
  }
`;

const EmptyCell = styled.td`
  height: 18px;
  padding: 0 1px;
  font-size: 12px;
  line-height: 17px;
  color: #222;
`;

const FootCell = styled.td`
  height: 32px;
  padding: 0;
  border: 1px solid #c9c9c9;
  border-width: 1px 0;
  background: #ededed;
`;

const SumWrap = styled.div`
  display: flex;
  gap: 2px;
  padding: 0 5px;

  & input,
  & button {
    height: 23px;
    border: none;
    border-radius: 3px;
    background: #d9d9d9;
  }
  & input {
    flex: 1;
    min-width: 0;
  }
  & button {
    display: flex;
    align-items: center;
    justify-content: center;
    width: 18px;
  }
`;

const ExportRow = styled.div`
  display: flex;
  align-items: flex-start;
  justify-content: center;
  height: 47px;
  padding-top: 10px;
  background: #dedede;
`;

const BlueButton = styled.button`
  width: 150px;
  height: 25px;
  border: 1px solid #163a85;
  border-radius: 2px;
  background: linear-gradient(#2c56b8, #18398a);
  box-shadow: inset 0 -1px 0 #6f86bd;
  font-size: 16px;
  line-height: 22px;
  color: #fff;
`;

const PagerRow = styled.div`
  display: flex;
  align-items: center;
  height: 34px;
  padding: 0 10px 1px;
  border-bottom: 1px solid #c7c7c7;
  background: #ededed;
  font-size: 12px;
  color: #333;
`;

const PagerButton = styled.button`
  display: flex;
  align-items: center;
  justify-content: center;
  width: 22px;
  height: 22px;
  border: 1px solid #a5a5a5;
  border-radius: 2px;
  background: linear-gradient(#e6e6e6, #c9c9c9);
`;

const PageGroup = styled.div`
  display: flex;
  gap: 1px;
  margin: 0 4px;
`;

const CurrentPage = styled.button`
  width: 15px;
  height: 22px;
  border: 1px solid #888;
  border-radius: 2px;
  background: #fff;
  font-size: 12px;
`;

const PageSizeLabel = styled.label`
  margin: 0 4px 0 20px;
`;

const SelectWrap = styled.div`
  display: grid;
  align-items: center;
  width: 48px;

  & > * {
    grid-area: 1 / 1;
  }
  & svg {
    justify-self: end;
    margin-right: 9px;
    pointer-events: none;
  }
  & select {
    width: 100%;
    height: 24px;
    padding: 0 5px;
    border: 1px solid #a0a0a0;
    border-radius: 3px;
    background: #d5d5d5;
    font-size: 12px;
    appearance: none;
  }
`;

const PageInfo = styled.div`
  margin-left: auto;
  color: #888;

  & b {
    color: #444;
  }
`;

const FormArea = styled.div`
  padding: 10px 10px 40px;
`;

const ButtonStrip = styled.div`
  display: flex;
  gap: 6px;
  height: 37px;
  margin-bottom: 20px;
  padding: 5px 4px;
  border: 1px solid #dedede;
  border-width: 1px 0;
`;

const Fields = styled.div`
  display: grid;
  grid-template-columns: ${({ $cols }) => $cols};
  margin-bottom: 17px;
  padding-left: 2px;
`;

const Field = styled.div`
  display: flex;
  flex-direction: column;
`;

const tones = {
  required: { label: "#1c3c8c", border: "#1c3c8c", fill: "#fff8bf" },
  date: { label: "#000", border: "#8a8a8a", fill: "#d5d5d5" },
  plain: { label: "#808080", border: "#bcbcbc", fill: "#fff" },
};

const FieldLabel = styled.label`
  display: flex;
  align-items: center;
  gap: 4px;
  height: 14px;
  font-size: 11px;
  font-weight: bold;
  line-height: 14px;
  white-space: nowrap;
  color: ${({ $tone = "plain" }) => tones[$tone].label};
`;

const FieldRow = styled.div`
  display: flex;
  align-items: center;
  gap: 7px;
`;

const FieldBox = styled.div`
  position: relative;
  width: ${({ $width }) => $width}px;
`;

const FieldInput = styled.input`
  display: block;
  width: 100%;
  height: 27px;
  border: 1px solid ${({ $tone = "plain" }) => tones[$tone].border};
  border-radius: 3px;
  background: ${({ $tone = "plain" }) => tones[$tone].fill};
`;

const IconButton = styled.button`
  display: flex;
  align-items: center;
  justify-content: center;
  width: 20px;
  height: 20px;
  border-radius: 2px;
  background: #555;
`;

const Tooltip = styled.div`
  position: absolute;
  z-index: 2;
  top: calc(100% + 15px);
  left: 50%;
  transform: translateX(-50%);
  padding: 0 8px;
  border: 1px solid #8a8a8a;
  background: #fff;
  box-shadow: 0 0 5px rgba(0, 0, 0, 0.5);
  font-size: 13px;
  line-height: 33px;
  white-space: nowrap;
  color: #666;

  &::before {
    content: "";
    position: absolute;
    top: -4px;
    left: 50%;
    width: 7px;
    height: 7px;
    margin-left: -4px;
    border: 1px solid #8a8a8a;
    border-width: 1px 0 0 1px;
    background: #fff;
    transform: rotate(45deg);
  }
`;

const DefinitionRow = styled.div`
  display: flex;
  gap: 27px;
  padding: 0 47px 0 2px;
  font-size: 12px;
  line-height: 12px;

  & > span:first-child {
    margin-right: auto;
  }
  & a {
    font-weight: bold;
    color: #1c3c8c;
  }
`;

const VScroll = styled.div`
  flex: none;
  display: flex;
  flex-direction: column;
  align-items: center;
  width: 16px;
  padding: 15px 0;
  background: #f0f0f0;
`;

const VThumb = styled.div`
  width: 100%;
  height: 254px;
  margin: 60px 0 auto;
  background: #cdcdcd;
`;

const HScroll = styled.div`
  flex: none;
  display: flex;
  align-items: center;
  gap: 7px;
  height: 17px;
  padding: 1px 34px 1px 15px;
  background: #f0f0f0;
`;

const HThumb = styled.div`
  flex: 1;
  align-self: stretch;
  background: #cdcdcd;
`;

const TaskRow = styled.footer`
  flex: none;
  display: flex;
  align-items: flex-end;
  gap: 2px;
  height: 30px;
  border-top: 1px solid #3f4d5f;
  box-shadow: inset 0 1px 0 #c3d1e2;
  background: linear-gradient(90deg, #8394ab 60px, #a7c0dc 92px, #a7c0dc 825px, #8093ac 870px);
`;

const StartButton = styled.button`
  margin: 0 12px 0 9px;
`;

const TaskButton = styled.button`
  display: flex;
  align-items: center;
  justify-content: center;
  width: 44px;
  height: 29px;
  border: 1px solid transparent;
  border-radius: 3px;
  ${({ $state }) =>
    $state &&
    css`
      border-color: #56697f;
      box-shadow: inset 0 0 0 1px rgba(255, 255, 255, 0.6);
      background: linear-gradient(135deg, #d2dfee, #a5bbd6);
    `}
  ${({ $state }) => $state === "active" && "background: linear-gradient(#eef4fa, #c5d5e8);"}
  ${({ $state }) => $state === "alert" && "background: linear-gradient(#f5e291, #f3b25e 60%, #ef8440);"}
  ${({ $stacked }) =>
    $stacked &&
    css`
      width: 39px;
      margin-right: 7px;
      box-shadow: inset 0 0 0 1px rgba(255, 255, 255, 0.6), 3px 0 0 #b7cae0, 4px 0 0 #56697f;
    `}
`;

const OfficeMark = styled.b`
  width: 16px;
  height: 16px;
  border: 2px solid ${({ $color }) => $color};
  border-radius: 2px;
  background: #fff;
  font-family: "Liberation Serif", serif;
  font-size: 13px;
  line-height: 12px;
  color: ${({ $color }) => $color};
`;

const Tray = styled.div`
  display: flex;
  align-items: center;
  gap: 8px;
  height: 29px;
  margin-left: auto;
  font-family: ${system};
  font-size: 12px;
  color: #fff;
`;

const Lang = styled.span`
  margin-right: 7px;
  padding-bottom: 6px;
  color: #e8edf3;
`;

const Clock = styled.time`
  margin: 0 10px 0 16px;
`;

const ShowDesktop = styled.button`
  width: 14px;
  height: 29px;
  border: 1px solid #4c5b6e;
  background: linear-gradient(90deg, #5d6f86, #a1b0c2);
`;

export default App;
